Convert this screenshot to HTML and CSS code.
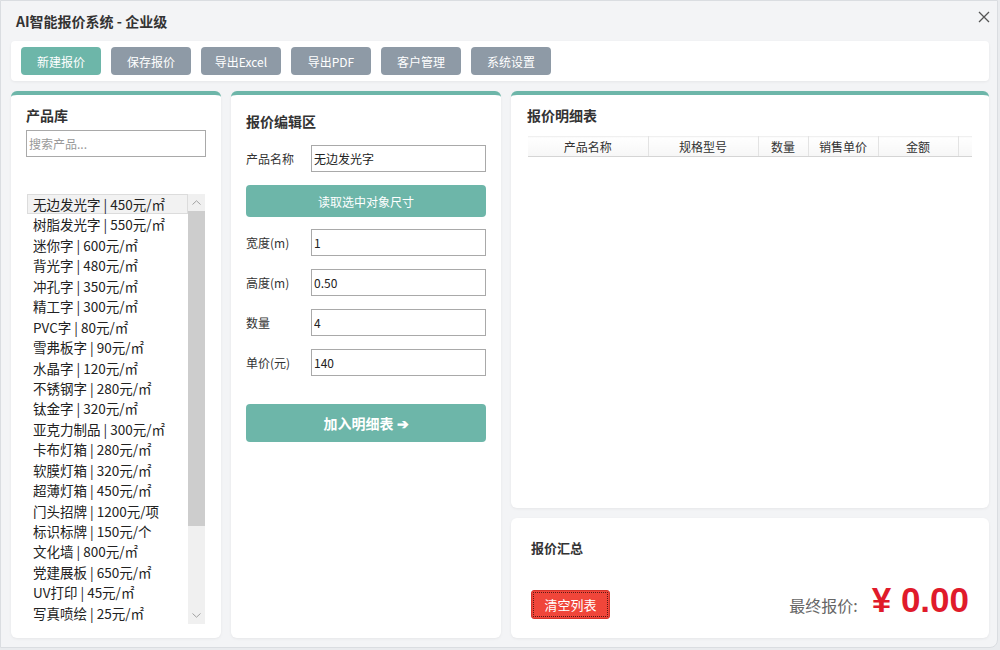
FILE: index.html
```html
<!DOCTYPE html>
<html lang="zh-CN">
  <head>
    <meta charset="UTF-8" />
    <meta name="viewport" content="width=device-width, initial-scale=1.0" />
    <title>AI智能报价系统 - 企业级</title>
    <link rel="stylesheet" href="styles.css">
  </head>
  <body>
    <div class="window">
      <div class="titlebar">
        <span class="app-title">AI智能报价系统 - 企业级</span>
        <button class="close-btn" title="关闭">
          <svg width="12" height="12" viewBox="0 0 12 12">
            <path d="M1 1 L11 11 M11 1 L1 11" stroke="#555" stroke-width="1.3" fill="none" />
          </svg>
        </button>
      </div>

      <div class="toolbar">
        <button class="tool-btn primary">新建报价</button>
        <button class="tool-btn">保存报价</button>
        <button class="tool-btn">导出Excel</button>
        <button class="tool-btn">导出PDF</button>
        <button class="tool-btn">客户管理</button>
        <button class="tool-btn">系统设置</button>
      </div>

      <div class="main">
        <!-- product library -->
        <div class="panel library">
          <h2 class="panel-title">产品库</h2>
          <input class="search" type="text" placeholder="搜索产品..." />
          <div class="listbox">
            <div class="product-list" id="productList"></div>
            <div class="scrollbar">
              <span class="sb-arrow">
                <svg width="9" height="5" viewBox="0 0 9 5"><path d="M0.5 4.5 L4.5 0.8 L8.5 4.5" stroke="#a0a0a0" fill="none" /></svg>
              </span>
              <div class="sb-track"><div class="sb-thumb"></div></div>
              <span class="sb-arrow">
                <svg width="9" height="5" viewBox="0 0 9 5"><path d="M0.5 0.5 L4.5 4.2 L8.5 0.5" stroke="#a0a0a0" fill="none" /></svg>
              </span>
            </div>
          </div>
        </div>

        <!-- editor -->
        <div class="panel editor">
          <h2 class="panel-title">报价编辑区</h2>
          <div class="field">
            <label>产品名称</label>
            <input type="text" id="name" value="无边发光字" />
          </div>
          <button class="read-btn">读取选中对象尺寸</button>
          <div class="field">
            <label>宽度(m)</label>
            <input type="text" id="width" value="1" />
          </div>
          <div class="field">
            <label>高度(m)</label>
            <input type="text" id="height" value="0.50" />
          </div>
          <div class="field">
            <label>数量</label>
            <input type="text" id="qty" value="4" />
          </div>
          <div class="field">
            <label>单价(元)</label>
            <input type="text" id="price" value="140" />
          </div>
          <button class="add-btn">加入明细表 ➔</button>
        </div>

        <div class="right-col">
          <div class="panel detail">
            <h2 class="panel-title">报价明细表</h2>
            <table class="detail-table">
              <thead>
                <tr>
                  <th class="c-name">产品名称</th>
                  <th class="c-spec">规格型号</th>
                  <th class="c-qty">数量</th>
                  <th class="c-price">销售单价</th>
                  <th class="c-amount">金额</th>
                  <th class="c-rest"></th>
                </tr>
              </thead>
              <tbody></tbody>
            </table>
          </div>

          <div class="panel summary">
            <h3 class="summary-title">报价汇总</h3>
            <div class="summary-row">
              <button class="clear-btn">清空列表</button>
              <div class="total">
                <span class="total-label">最终报价:</span>
                <span class="total-value">¥ 0.00</span>
              </div>
            </div>
          </div>
        </div>
      </div>
    </div>

    <script>
      const products = [
        ["无边发光字", "450元/㎡"],
        ["树脂发光字", "550元/㎡"],
        ["迷你字", "600元/㎡"],
        ["背光字", "480元/㎡"],
        ["冲孔字", "350元/㎡"],
        ["精工字", "300元/㎡"],
        ["PVC字", "80元/㎡"],
        ["雪弗板字", "90元/㎡"],
        ["水晶字", "120元/㎡"],
        ["不锈钢字", "280元/㎡"],
        ["钛金字", "320元/㎡"],
        ["亚克力制品", "300元/㎡"],
        ["卡布灯箱", "280元/㎡"],
        ["软膜灯箱", "320元/㎡"],
        ["超薄灯箱", "450元/㎡"],
        ["门头招牌", "1200元/项"],
        ["标识标牌", "150元/个"],
        ["文化墙", "800元/㎡"],
        ["党建展板", "650元/㎡"],
        ["UV打印", "45元/㎡"],
        ["写真喷绘", "25元/㎡"],
      ];

      const list = document.getElementById("productList");
      products.forEach(([name, price], i) => {
        const item = document.createElement("div");
        item.className = "product-item" + (i === 0 ? " selected" : "");
        item.textContent = `${name} | ${price}`;
        item.addEventListener("click", () => {
          list.querySelectorAll(".product-item").forEach((el) => el.classList.remove("selected"));
          item.classList.add("selected");
          document.getElementById("name").value = name;
          document.getElementById("price").value = parseInt(price, 10);
        });
        list.appendChild(item);
      });
    </script>
  </body>
</html>
```

FILE: styles.css
```css
* {
  box-sizing: border-box;
}

body {
  margin: 0;
  background-color: #e9ebee;
  font-family: "Noto Sans CJK SC", "Noto Sans", sans-serif;
  color: #333;
}

button {
  font-family: inherit;
  cursor: pointer;
}

.window {
  width: 998px;
  height: 648px;
  background-color: #f3f4f6;
  border: 1px solid #dadde1;
  border-radius: 0 0 8px 0;
  padding: 0 8px 9px 10px;
  display: flex;
  flex-direction: column;
}

/* title bar */
.titlebar {
  height: 40px;
  display: flex;
  align-items: center;
  justify-content: space-between;
  padding-left: 5px;
}

.app-title {
  font-size: 14px;
  font-weight: bold;
  color: #333;
}

.close-btn {
  border: none;
  background: none;
  padding: 0;
  width: 14px;
  height: 14px;
  margin-right: -2px;
  margin-top: -8px;
  display: flex;
  align-items: center;
  justify-content: center;
}

/* toolbar */
.toolbar {
  height: 40px;
  background-color: #fff;
  border-radius: 4px;
  box-shadow: 0 1px 3px rgba(0, 0, 0, 0.06);
  display: flex;
  align-items: center;
  gap: 10px;
  padding: 0 10px;
}

.tool-btn {
  width: 80px;
  height: 28px;
  border: none;
  border-radius: 4px;
  background-color: #8e9aa6;
  color: #fff;
  font-size: 12px;
}

.tool-btn.primary {
  background-color: #6db6a9;
}

/* main area */
.main {
  flex: 1;
  display: flex;
  gap: 10px;
  margin-top: 10px;
  min-height: 0;
}

.panel {
  background-color: #fff;
  border-top: 4px solid #6db6a9;
  border-radius: 6px;
  box-shadow: 0 1px 3px rgba(0, 0, 0, 0.06);
}

.panel-title {
  margin: 0;
  font-size: 14px;
  font-weight: bold;
  line-height: 20px;
  color: #333;
}

/* product library */
.library {
  width: 210px;
  padding: 10px 15px 0 15px;
  display: flex;
  flex-direction: column;
}

.search {
  margin-top: 5px;
  width: 180px;
  height: 27px;
  border: 1px solid #a9a9a9;
  padding: 0 2px;
  font-size: 12px;
  font-family: inherit;
  outline: none;
}

.search::placeholder {
  color: #999;
}

.listbox {
  margin-top: 37px;
  margin-left: 1px;
  width: 178px;
  height: 430px;
  display: flex;
}

.product-list {
  flex: 1;
  overflow: hidden;
}

.product-item {
  height: 20.45px;
  line-height: 19px;
  padding-left: 5px;
  font-size: 13.5px;
  color: #222;
  white-space: nowrap;
  border: 1px solid transparent;
}

.product-item.selected {
  background-color: #f2f2f2;
  border-color: #dcdcdc;
}

/* list scrollbar */
.scrollbar {
  width: 17px;
  display: flex;
  flex-direction: column;
  background-color: #f0f0f0;
}

.sb-arrow {
  height: 17px;
  display: flex;
  align-items: center;
  justify-content: center;
}

.sb-track {
  flex: 1;
}

.sb-thumb {
  height: 315px;
  background-color: #cdcdcd;
}

/* editor */
.editor {
  width: 270px;
  padding: 16px 15px 0 15px;
}

.field {
  display: flex;
  align-items: center;
  margin-top: 13px;
}

.editor .panel-title + .field {
  margin-top: 14px;
}

.read-btn + .field {
  margin-top: 12px;
}

.field label {
  width: 65px;
  font-size: 12px;
  color: #333;
}

.field input {
  width: 175px;
  height: 27px;
  border: 1px solid #a9a9a9;
  padding: 0 2px;
  font-size: 12px;
  font-family: inherit;
  color: #222;
  outline: none;
}

.read-btn {
  display: block;
  width: 240px;
  height: 32px;
  margin-top: 13px;
  border: none;
  border-radius: 4px;
  background-color: #6db6a9;
  color: #fff;
  font-size: 12px;
}

.add-btn {
  display: block;
  width: 240px;
  height: 38px;
  margin-top: 28px;
  border: none;
  border-radius: 4px;
  background-color: #6db6a9;
  color: #fff;
  font-size: 14px;
  font-weight: bold;
}

/* right column */
.right-col {
  flex: 1;
  display: flex;
  flex-direction: column;
  gap: 10px;
}

.detail {
  flex: 1;
  padding: 10px 16px 0 16px;
}

.detail-table {
  margin-top: 11px;
  margin-left: 1px;
  width: 444px;
  border-collapse: collapse;
  table-layout: fixed;
}

.detail-table th {
  height: 20px;
  padding: 0;
  font-size: 12px;
  font-weight: normal;
  color: #333;
  background: linear-gradient(#fff, #f6f6f6);
  border-top: 1px solid #f0f0f0;
  border-bottom: 1px solid #d5d5d5;
  border-right: 1px solid #e3e3e3;
}

.c-name { width: 120px; }
.c-spec { width: 110px; }
.c-qty { width: 50px; }
.c-price { width: 70px; }
.c-amount { width: 80px; }

.detail-table th.c-rest {
  border-right: none;
}

/* summary */
.summary {
  height: 120px;
  border-top: none;
  padding: 20px 20px 0 20px;
}

.summary-title {
  margin: 0;
  font-size: 13px;
  font-weight: bold;
  line-height: 20px;
  color: #333;
}

.summary-row {
  margin-top: 30px;
  display: flex;
  align-items: center;
  justify-content: space-between;
}

.clear-btn {
  width: 79px;
  height: 29px;
  border: 1px solid #d6332a;
  border-radius: 3px;
  background-color: #f0463a;
  color: #fff;
  font-size: 13px;
  outline: 1px dotted #5a1a15;
  outline-offset: -3px;
}

.total {
  display: flex;
  align-items: baseline;
  gap: 14px;
  margin-top: -8px;
}

.total-label {
  font-size: 16px;
  color: #666;
}

.total-value {
  font-size: 35px;
  font-weight: bold;
  color: #e01b2b;
  font-family: "Liberation Sans", "Noto Sans CJK SC", sans-serif;
}
```
